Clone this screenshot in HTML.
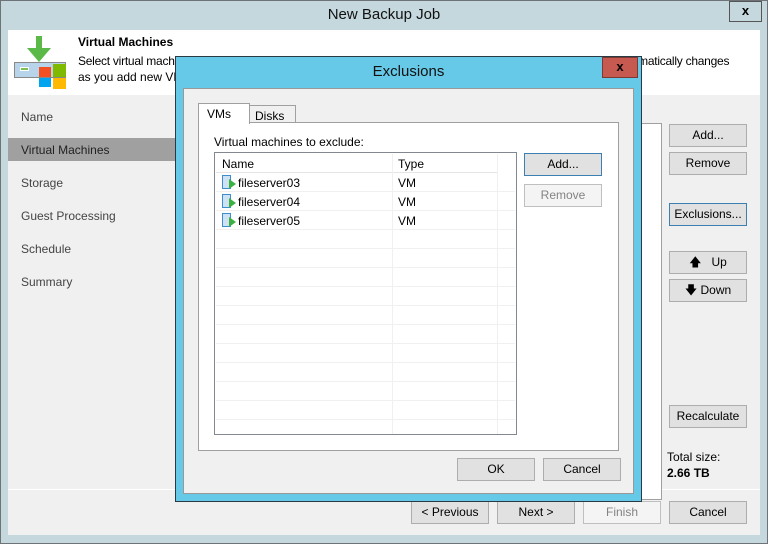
<!DOCTYPE html>
<html><head><style>
*{box-sizing:border-box;margin:0;padding:0}
body{width:768px;height:544px;overflow:hidden;font-family:"Liberation Sans",sans-serif;font-size:12px;color:#000;background:#c5d8de;position:relative}
.a{position:absolute}
.btn{position:absolute;background:#e1e1e1;border:1px solid #adadad;text-align:center;line-height:21px;font-size:12px;color:#000}
.blue{border-color:#3c7fb1}
.dis{background:#f4f4f4;border-color:#bfbfbf;color:#838383}
.nav{position:absolute;left:21px;font-size:12px;color:#444}
.row{position:absolute;left:1px;right:1px;height:19px;border-bottom:1px solid #f0f0f0}
.vm{position:absolute;left:6px;top:2px;width:9px;height:14px;border:1px solid #3a8fd0;background:#cfe2f3}
.pl{position:absolute;left:13px;top:6px;width:0;height:0;border-left:7px solid #3cb043;border-top:5px solid transparent;border-bottom:5px solid transparent}
</style></head><body>
<div class="a" style="left:0;top:0;width:768px;height:544px;border:1px solid #6d7377"></div>
<div class="a" style="left:0;top:6px;width:768px;text-align:center;font-size:15px;color:#111">New Backup Job</div>
<div class="a" style="left:729px;top:1px;width:33px;height:21px;border:1px solid #555;background:#c5d8de;text-align:center;font-weight:bold;font-size:13px;line-height:18px">x</div>
<div class="a" style="left:8px;top:30px;width:752px;height:505px;background:#f0f0f0"></div>
<div class="a" style="left:8px;top:30px;width:752px;height:65px;background:#fff"></div>
<!-- logo -->
<div class="a" style="left:14px;top:62px;width:52px;height:16px;background:#b7d4ea;border:1px solid #888"></div>
<div class="a" style="left:20px;top:67px;width:9px;height:4px;background:#7cc250;border:1px solid #fff"></div>
<div class="a" style="left:39px;top:67px;width:12px;height:10px;background:#f25022"></div>
<div class="a" style="left:53px;top:64px;width:13px;height:13px;background:#7fba00"></div>
<div class="a" style="left:39px;top:78px;width:12px;height:9px;background:#00a4ef"></div>
<div class="a" style="left:53px;top:78px;width:13px;height:11px;background:#ffb900"></div>
<div class="a" style="left:36px;top:36px;width:6px;height:16px;background:#5bb948"></div>
<div class="a" style="left:27px;top:48px;width:0;height:0;border-left:12px solid transparent;border-right:12px solid transparent;border-top:14px solid #5bb948"></div>
<div class="a" style="left:78px;top:35px;font-weight:bold">Virtual Machines</div>
<div class="a" style="left:78px;top:53px;width:674px;line-height:16px;white-space:nowrap;overflow:hidden;letter-spacing:-0.25px">Select virtual machines to process via containers, or granularly. Container provides dynamic selection that automatically changes</div>
<div class="a" style="left:78px;top:69px;line-height:16px;white-space:nowrap">as you add new VMs to container.</div>
<div class="a" style="left:8px;top:138px;width:167px;height:23px;background:#a0a0a0"></div>
<div class="nav" style="top:110px">Name</div>
<div class="nav" style="top:143px;color:#222">Virtual Machines</div>
<div class="nav" style="top:176px">Storage</div>
<div class="nav" style="top:209px">Guest Processing</div>
<div class="nav" style="top:242px">Schedule</div>
<div class="nav" style="top:275px">Summary</div>
<div class="a" style="left:8px;top:489px;width:752px;height:1px;background:#fff"></div>
<!-- right list -->
<div class="a" style="left:600px;top:123px;width:62px;height:377px;background:#fff;border:1px solid #a0a0a0"></div>
<div class="btn" style="left:669px;top:124px;width:78px;height:23px">Add...</div>
<div class="btn" style="left:669px;top:152px;width:78px;height:23px">Remove</div>
<div class="btn blue" style="left:669px;top:203px;width:78px;height:23px">Exclusions...</div>
<div class="btn" style="left:669px;top:251px;width:78px;height:23px">&#129093;&nbsp;&nbsp;&nbsp;Up</div>
<div class="btn" style="left:669px;top:279px;width:78px;height:23px">&#129095;&nbsp;Down</div>
<div class="btn" style="left:669px;top:405px;width:78px;height:23px">Recalculate</div>
<div class="a" style="left:667px;top:450px">Total size:</div>
<div class="a" style="left:667px;top:466px;font-weight:bold">2.66 TB</div>
<div class="btn" style="left:411px;top:501px;width:78px;height:23px">&lt; Previous</div>
<div class="btn" style="left:497px;top:501px;width:78px;height:23px">Next &gt;</div>
<div class="btn dis" style="left:583px;top:501px;width:78px;height:23px">Finish</div>
<div class="btn" style="left:669px;top:501px;width:78px;height:23px">Cancel</div>
<!-- dialog -->
<div class="a" style="left:175px;top:56px;width:467px;height:446px;background:#66c9e8;border:1px solid #2a3a44"></div>
<div class="a" style="left:175px;top:63px;width:467px;text-align:center;font-size:15px;color:#111">Exclusions</div>
<div class="a" style="left:602px;top:57px;width:36px;height:21px;background:#c75a50;border:1px solid #7a3a33;text-align:center;font-weight:bold;font-size:13px;line-height:18px">x</div>
<div class="a" style="left:183px;top:88px;width:451px;height:406px;background:#f0f0f0;border:1px solid #999"></div>
<div class="a" style="left:198px;top:122px;width:421px;height:329px;background:#fff;border:1px solid #a0a0a0"></div>
<div class="a" style="left:249px;top:105px;width:47px;height:18px;background:#f0f0f0;border:1px solid #a0a0a0;padding:3px 0 0 5px">Disks</div>
<div class="a" style="left:198px;top:103px;width:52px;height:21px;background:#fff;border:1px solid #a0a0a0;border-bottom:none;padding:3px 0 0 8px">VMs</div>
<div class="a" style="left:214px;top:135px">Virtual machines to exclude:</div>
<div class="a" style="left:214px;top:152px;width:303px;height:283px;background:#fff;border:1px solid #828790;overflow:hidden">
<div class="a" style="left:1px;top:1px;width:282px;height:19px;border-bottom:1px solid #e5e5e5;background:#fff"></div>
<div class="a" style="left:177px;top:1px;width:1px;height:280px;background:#f0f0f0"></div>
<div class="a" style="left:282px;top:1px;width:1px;height:280px;background:#f0f0f0"></div>
<div class="a" style="left:7px;top:4px">Name</div>
<div class="a" style="left:183px;top:4px">Type</div>
<div class="row" style="top:20px"><div class="vm"></div><div class="pl"></div><span class="a" style="left:22px;top:3px">fileserver03</span><span class="a" style="left:182px;top:3px">VM</span></div>
<div class="row" style="top:39px"><div class="vm"></div><div class="pl"></div><span class="a" style="left:22px;top:3px">fileserver04</span><span class="a" style="left:182px;top:3px">VM</span></div>
<div class="row" style="top:58px"><div class="vm"></div><div class="pl"></div><span class="a" style="left:22px;top:3px">fileserver05</span><span class="a" style="left:182px;top:3px">VM</span></div>
<div class="row" style="top:77px"></div><div class="row" style="top:96px"></div><div class="row" style="top:115px"></div><div class="row" style="top:134px"></div><div class="row" style="top:153px"></div><div class="row" style="top:172px"></div><div class="row" style="top:191px"></div><div class="row" style="top:210px"></div><div class="row" style="top:229px"></div><div class="row" style="top:248px"></div>
</div>
<div class="btn blue" style="left:524px;top:153px;width:78px;height:23px">Add...</div>
<div class="btn dis" style="left:524px;top:184px;width:78px;height:23px">Remove</div>
<div class="btn" style="left:457px;top:458px;width:78px;height:23px">OK</div>
<div class="btn" style="left:543px;top:458px;width:78px;height:23px">Cancel</div>
</body></html>
